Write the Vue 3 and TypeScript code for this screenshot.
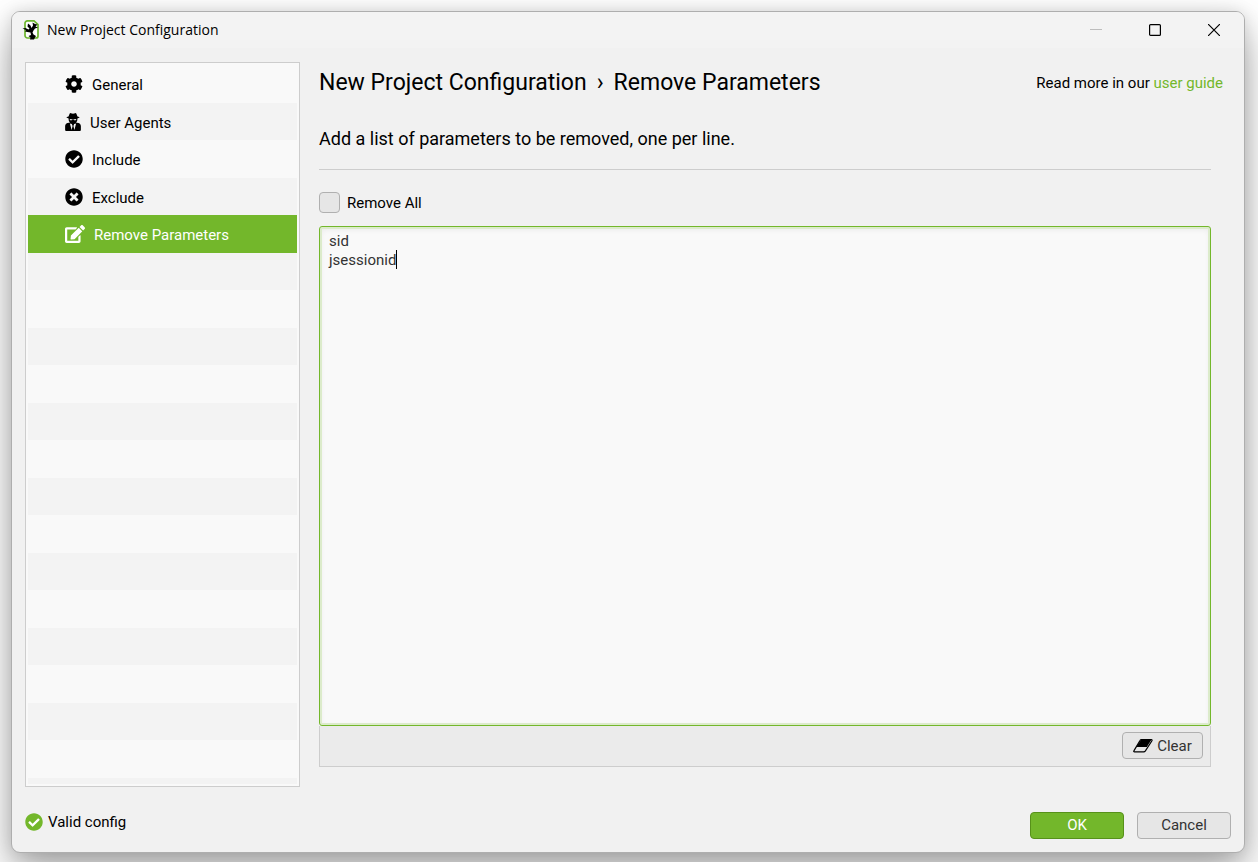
<script setup lang="ts">
import { ref } from 'vue'

interface Section {
  label: string
  icon: string
  width: number
}

const sections: Section[] = [
  { label: 'General', icon: 'cog', width: 18 },
  { label: 'User Agents', icon: 'agent', width: 16 },
  { label: 'Include', icon: 'check', width: 18 },
  { label: 'Exclude', icon: 'cross', width: 18 },
  { label: 'Remove Parameters', icon: 'edit', width: 20 },
]

const shapes: Record<string, { box: string; d: string }> = {
  cog: {
    box: '0 0 512 512',
    d: 'M487.4 315.7l-42.6-24.6c4.3-23.2 4.3-47 0-70.2l42.6-24.6c4.9-2.8 7.1-8.6 5.5-14-11.1-35.6-30-67.8-54.7-94.6-3.8-4.1-10-5.1-14.8-2.3L380.8 110c-17.9-15.4-38.5-27.3-60.8-35.1V25.8c0-5.6-3.9-10.5-9.4-11.7-36.7-8.2-74.3-7.8-109.2 0-5.5 1.2-9.4 6.1-9.4 11.7V75c-22.2 7.9-42.8 19.8-60.8 35.1L88.7 85.5c-4.9-2.8-11-1.9-14.8 2.3-24.7 26.7-43.6 58.9-54.7 94.6-1.7 5.4.6 11.2 5.5 14L67.3 221c-4.3 23.2-4.3 47 0 70.2l-42.6 24.6c-4.9 2.8-7.1 8.6-5.5 14 11.1 35.6 30 67.8 54.7 94.6 3.8 4.1 10 5.1 14.8 2.3l42.6-24.6c17.9 15.4 38.5 27.3 60.8 35.1v49.2c0 5.6 3.9 10.5 9.4 11.7 36.7 8.2 74.3 7.8 109.2 0 5.5-1.2 9.4-6.1 9.4-11.7v-49.2c22.2-7.9 42.8-19.8 60.8-35.1l42.6 24.6c4.9 2.8 11 1.9 14.8-2.3 24.7-26.7 43.6-58.9 54.7-94.6 1.5-5.5-.7-11.3-5.6-14.1zM256 336c-44.1 0-80-35.9-80-80s35.9-80 80-80 80 35.9 80 80-35.9 80-80 80z',
  },
  agent: {
    box: '0 0 448 512',
    d: 'M96 96L128 20Q138-4 164 4L224 18L284 4Q310-4 320 20L352 96Q412 104 412 124Q412 144 348 154V184C348 220 330 250 308 268L336 280L384 284C424 294 448 336 448 380V480Q448 512 416 512H32Q0 512 0 480V380C0 336 24 294 64 284L112 280L140 268C118 250 100 220 100 184V154Q36 144 36 124Q36 104 96 96ZM134 172V190Q138 208 166 208Q196 208 206 182H242Q252 208 282 208Q310 208 314 190V172Q224 182 134 172ZM136 296L184 484L212 368L190 312ZM312 296L258 312L236 368L264 484Z',
  },
  check: {
    box: '0 0 512 512',
    d: 'M504 256c0 136.967-111.033 248-248 248S8 392.967 8 256 119.033 8 256 8s248 111.033 248 248zM227.314 387.314l184-184c6.248-6.248 6.248-16.379 0-22.627l-22.627-22.627c-6.248-6.249-16.379-6.249-22.628 0L216 308.118l-70.059-70.059c-6.248-6.248-16.379-6.248-22.628 0l-22.627 22.627c-6.248 6.248-6.248 16.379 0 22.627l104 104c6.249 6.249 16.379 6.249 22.628.001z',
  },
  cross: {
    box: '0 0 512 512',
    d: 'M256 8C119 8 8 119 8 256s111 248 248 248 248-111 248-248S393 8 256 8zm121.6 313.1c4.7 4.7 4.7 12.3 0 17L338 377.6c-4.7 4.7-12.3 4.7-17 0L256 312l-65.1 65.6c-4.7 4.7-12.3 4.7-17 0L134.4 338c-4.7-4.7-4.7-12.3 0-17l65.6-65-65.6-65.1c-4.7-4.7-4.7-12.3 0-17l39.6-39.6c4.7-4.7 12.3-4.7 17 0l65 65.7 65.1-65.6c4.7-4.7 12.3-4.7 17 0l39.6 39.6c4.7 4.7 4.7 12.3 0 17L312 256l65.6 65.1z',
  },
  edit: {
    box: '0 0 576 512',
    d: 'M402.6 83.2l90.2 90.2c3.8 3.8 3.8 10 0 13.8L274.4 405.6l-92.8 10.3c-12.4 1.4-22.9-9.1-21.5-21.5l10.3-92.8L388.8 83.2c3.8-3.8 10-3.8 13.8 0zm162-22.9l-48.8-48.8c-15.2-15.2-39.9-15.2-55.2 0l-35.4 35.4c-3.8 3.8-3.8 10 0 13.8l90.2 90.2c3.8 3.8 10 3.8 13.8 0l35.4-35.4c15.2-15.3 15.2-40 0-55.2zM384 346.2V448H64V128h229.8c3.2 0 6.2-1.3 8.5-3.5l40-40c7.6-7.6 2.2-20.5-8.5-20.5H48C21.5 64 0 85.5 0 112v352c0 26.5 21.5 48 48 48h352c26.5 0 48-21.5 48-48V306.2c0-10.7-12.9-16-20.5-8.5l-40 40c-2.2 2.3-3.5 5.3-3.5 8.5z',
  },
}

const active = ref('Remove Parameters')
const removeAll = ref(false)
const parameters = ref('sid\njsessionid')
</script>

<template>
  <div class="desktop">
    <div class="window">
      <header class="titlebar">
        <svg class="logo" viewBox="0 0 18 22" aria-hidden="true">
          <path d="M5.5 1.8H12L16 5.5V17A2 2 0 0 1 14 19H5.5A2.5 2.5 0 0 1 3 16.5V4.5A2.5 2.5 0 0 1 5.5 1.8Z" fill="#fff" stroke="#6cb52d" stroke-width="1.7" />
          <path d="M6 4.5L8.5 6.5L9.5 9L11 6.5L10.5 3.5L13 5L15.5 5.5L13.5 7.5L16 8.5L13 9.5L11.5 11.5L10.5 13.5L11.5 15.5L14 17L13 18.5L12 20.5H8L8.5 18.5L6.5 17L9 16L8.5 13.5L5.5 13L3 12.5L4 11L.5 9.5L3.5 9L6.5 10.5L7.5 9.5L5.5 7.5Z" fill="#000" />
        </svg>
        <span class="title">New Project Configuration</span>
        <div class="controls">
          <button type="button" aria-label="Minimize" disabled>
            <svg viewBox="0 0 12 12"><path d="M0 5.5H12" stroke="#bdbdbd" /></svg>
          </button>
          <button type="button" aria-label="Maximize">
            <svg viewBox="0 0 12 12"><rect x=".6" y=".6" width="10.8" height="10.8" rx="1" fill="none" stroke="#000" stroke-width="1.2" /></svg>
          </button>
          <button type="button" aria-label="Close">
            <svg viewBox="0 0 12 12"><path d="M0 0L12 12M12 0L0 12" stroke="#000" stroke-width="1.2" /></svg>
          </button>
        </div>
      </header>

      <div class="body">
        <nav class="sidebar">
          <button
            v-for="s in sections"
            :key="s.label"
            type="button"
            class="item"
            :class="{ active: active === s.label }"
            @click="active = s.label"
          >
            <svg :width="s.width" height="18" :viewBox="shapes[s.icon].box" aria-hidden="true">
              <path :d="shapes[s.icon].d" fill="currentColor" fill-rule="evenodd" />
            </svg>
            <span>{{ s.label }}</span>
          </button>
        </nav>

        <main class="content">
          <div class="heading">
            <h1>
              <span>New Project Configuration</span>
              <span class="sep">›</span>
              <span>{{ active }}</span>
            </h1>
            <p class="guide">Read more in our <a href="#">user guide</a></p>
          </div>
          <div class="panel">
            <p class="intro">Add a list of parameters to be removed, one per line.</p>
            <label class="check">
              <input v-model="removeAll" type="checkbox" />
              <span>Remove All</span>
            </label>
            <div class="editor">
              <textarea v-model="parameters" aria-label="Parameters to remove" spellcheck="false"></textarea>
              <span class="caret"></span>
            </div>
            <div class="toolbar">
              <button type="button" class="btn clear" @click="parameters = ''">
                <svg width="20" height="14" viewBox="0 0 20 14" aria-hidden="true">
                  <path d="M8.4 .5H18.6L13.8 8H3Z" fill="#000" />
                  <path d="M8.4 .7H18.2Q19.6 .7 18.8 2L12.4 11.8Q11.7 12.8 10.6 12.8H1.6Q.2 12.8 1 11.6L7 1.6Q7.5 .7 8.4 .7Z" fill="none" stroke="#000" stroke-width="1.2" />
                </svg>
                <span>Clear</span>
              </button>
            </div>
          </div>
        </main>
      </div>

      <footer class="footer">
        <div class="status">
          <svg width="18" height="18" viewBox="0 0 512 512" aria-hidden="true">
            <circle cx="256" cy="256" r="200" fill="#fff" />
            <path :d="shapes.check.d" fill="#73b72b" fill-rule="evenodd" />
          </svg>
          <span>Valid config</span>
        </div>
        <div class="actions">
          <button type="button" class="btn primary">OK</button>
          <button type="button" class="btn">Cancel</button>
        </div>
      </footer>
    </div>
  </div>
</template>

<style>
body {
  margin: 0;
  background: #fff;
}
</style>

<style scoped>
* {
  box-sizing: border-box;
}
.desktop {
  display: flex;
  height: 100vh;
  min-height: 480px;
  padding: 11px 13px 9px 11px;
  overflow: hidden;
  font: 15px/20px Roboto, "Liberation Sans", sans-serif;
  color: #000;
}
button {
  font: inherit;
  color: inherit;
}
h1,
p {
  margin: 0;
  font-weight: 400;
}
.window {
  flex: 1;
  display: flex;
  flex-direction: column;
  min-width: 0;
  border: 1px solid #aeaeae;
  border-radius: 9px;
  background: #f1f1f1;
  box-shadow: 0 20px 40px rgba(0, 0, 0, 0.34), 0 0 16px rgba(0, 0, 0, 0.12);
}
.titlebar {
  display: flex;
  align-items: center;
  height: 36px;
  padding-right: 1px;
  padding-left: 10px;
  border-radius: 8px 8px 0 0;
  background: #f3f3f3;
}
.logo {
  width: 18px;
  height: 22px;
}
.title {
  margin-left: 7px;
  font: 14px/20px "Open Sans", "Noto Sans", sans-serif;
}
.controls {
  display: flex;
  margin-left: auto;
}
.controls button {
  display: grid;
  place-items: center;
  width: 59px;
  height: 36px;
  padding: 0;
  border: 0;
  background: none;
}
.controls svg {
  width: 12px;
  height: 12px;
}
.body {
  flex: 1;
  display: flex;
  gap: 19px;
  min-height: 0;
  padding: 14px 21px 0 13px;
}
.sidebar {
  width: 275px;
  flex: none;
  padding: 2px;
  border: 1px solid #cdcdcd;
  background: repeating-linear-gradient(#f9f9f9 0 38px, #f3f3f3 38px 75px) content-box, #f9f9f9;
}
.item {
  display: flex;
  align-items: center;
  gap: 9px;
  width: 100%;
  height: 37px;
  padding: 2px 0 0 37px;
  border: 0;
  background: none;
  text-align: left;
}
.item:nth-child(odd) {
  height: 38px;
}
.item svg {
  margin-top: -2px;
}
.item.active {
  background: #73b72b;
  color: #fff;
}
.content {
  flex: 1;
  display: flex;
  flex-direction: column;
  min-width: 0;
}
.heading {
  display: flex;
  justify-content: space-between;
  align-items: center;
  height: 42px;
}
h1 {
  display: flex;
  font-size: 23px;
  line-height: 28px;
}
.sep {
  margin: 0 10px;
}
.guide a {
  color: #73b72b;
  text-decoration: none;
}
.panel {
  flex: 1;
  display: flex;
  flex-direction: column;
  min-height: 0;
  margin: 0 12px 20px 0;
}
.intro {
  padding: 23px 0 18px;
  border-bottom: 1px solid #cdcdcd;
  font-size: 18px;
  line-height: 24px;
}
.check {
  display: flex;
  align-items: center;
  align-self: flex-start;
  gap: 7px;
  margin: 22px 0 13px;
}
.check input {
  appearance: none;
  width: 21px;
  height: 21px;
  margin: 0;
  border: 1px solid #b0b0b0;
  border-radius: 4px;
  background: #e6e6e6;
}
.check input:checked {
  background: #73b72b;
}
.editor {
  position: relative;
  flex: 1;
  display: flex;
  min-height: 0;
}
textarea {
  flex: 1;
  min-width: 0;
  padding: 5px 9px;
  border: 1px solid #73b72b;
  border-radius: 3px;
  outline: 0;
  resize: none;
  background: #f9f9f9;
  box-shadow: inset 0 0 0 2px #dcebcb, inset 0 2px 6px rgba(0, 0, 0, 0.08);
  color: #333;
  caret-color: transparent;
  font: 15px/19px Roboto, "Liberation Sans", sans-serif;
}
.caret {
  position: absolute;
  left: 77px;
  top: 24px;
  width: 1px;
  height: 19px;
  background: #000;
}
.toolbar {
  display: flex;
  justify-content: flex-end;
  padding: 6px 7px 7px;
  border: 1px solid #cdcdcd;
  border-top: 0;
  background: #ebebeb;
}
.btn {
  display: flex;
  align-items: center;
  justify-content: center;
  width: 94px;
  height: 27px;
  padding: 0;
  border: 1px solid #b0b0b0;
  border-radius: 4px;
  background: #e6e6e6;
  color: #333;
}
.clear {
  gap: 4px;
  width: 81px;
}
.primary {
  border-color: #57911a;
  background: #73b72b;
  color: #fff;
}
.footer {
  display: flex;
  justify-content: space-between;
  align-items: center;
  height: 65px;
  padding: 11px 13px 0;
}
.status {
  display: flex;
  align-items: center;
  gap: 5px;
  height: 27px;
  margin-top: -7px;
}
.actions {
  display: flex;
  gap: 13px;
}
</style>
